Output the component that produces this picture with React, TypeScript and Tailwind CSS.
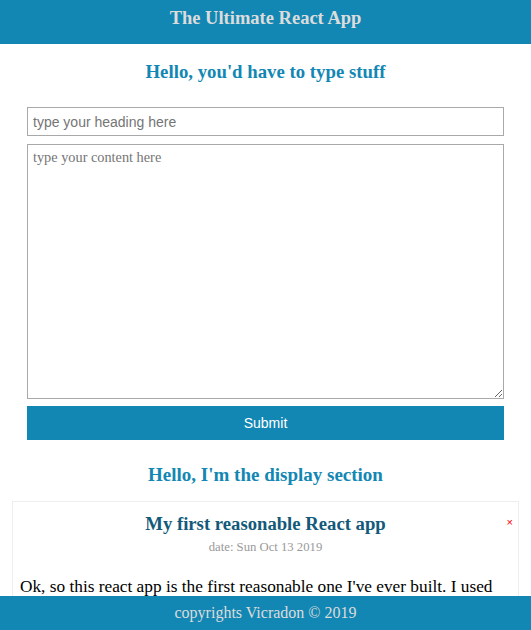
import React from "react";

export default function App() {
  return (
    <div className="min-h-screen bg-white font-['Liberation_Serif',serif]">
      <header className="h-[44px] bg-[#1387b3] flex items-center justify-center pb-[8px]">
        <h1 className="text-[18.5px] font-bold text-[#dcdcdc] leading-none">The Ultimate React App</h1>
      </header>
      <h2 className="text-center text-[18.8px] font-bold text-[#1387b3] mt-[18px] leading-[20px]">
        Hello, you'd have to type stuff
      </h2>
      <form className="w-[477px] mx-auto mt-[25px] flex flex-col" onSubmit={(e) => e.preventDefault()}>
        <input
          type="text"
          placeholder="type your heading here"
          className="h-[29px] border border-[#a9a9a9] px-[5px] text-[14px] font-['Liberation_Sans',sans-serif] placeholder:text-[#757575] outline-none"
        />
        <textarea
          placeholder="type your content here"
          className="mt-[8px] h-[255px] border border-[#a9a9a9] px-[5px] py-[2px] text-[14.3px] font-['Liberation_Serif',serif] placeholder:text-[#757575] outline-none resize-y"
        />
        <button
          type="submit"
          className="mt-[7px] h-[34px] bg-[#1387b3] text-white text-[14px] font-['Liberation_Sans',sans-serif]"
        >
          Submit
        </button>
      </form>
      <h2 className="text-center text-[19px] font-bold text-[#1387b3] mt-[25px] leading-[20px]">
        Hello, I'm the display section
      </h2>
      <div className="mx-[12px] mt-[16px] border border-[#eeeeee] relative pb-[60px]">
        <span className="absolute right-[5px] top-[15px] text-[#ff0000] text-[11px] font-['Liberation_Sans',sans-serif] leading-none">
          ×
        </span>
        <h3 className="text-center text-[18.7px] font-bold text-[#135a7a] mt-[12px] leading-[20px]">
          My first reasonable React app
        </h3>
        <p className="text-center text-[12.7px] text-[#999999] mt-[6px] leading-[14px]">date: Sun Oct 13 2019</p>
        <p className="px-[7px] mt-[22px] text-[17.3px] text-black leading-[22px]">
          Ok, so this react app is the first reasonable one I've ever built. I used
          create-react-app to set it up and styled it with plain CSS.
        </p>
      </div>
      <footer className="fixed bottom-0 left-0 right-0 h-[34px] bg-[#1387b3] flex items-center justify-center">
        <span className="text-[#dcdcdc] text-[16px]">copyrights Vicradon © 2019</span>
      </footer>
    </div>
  );
}
